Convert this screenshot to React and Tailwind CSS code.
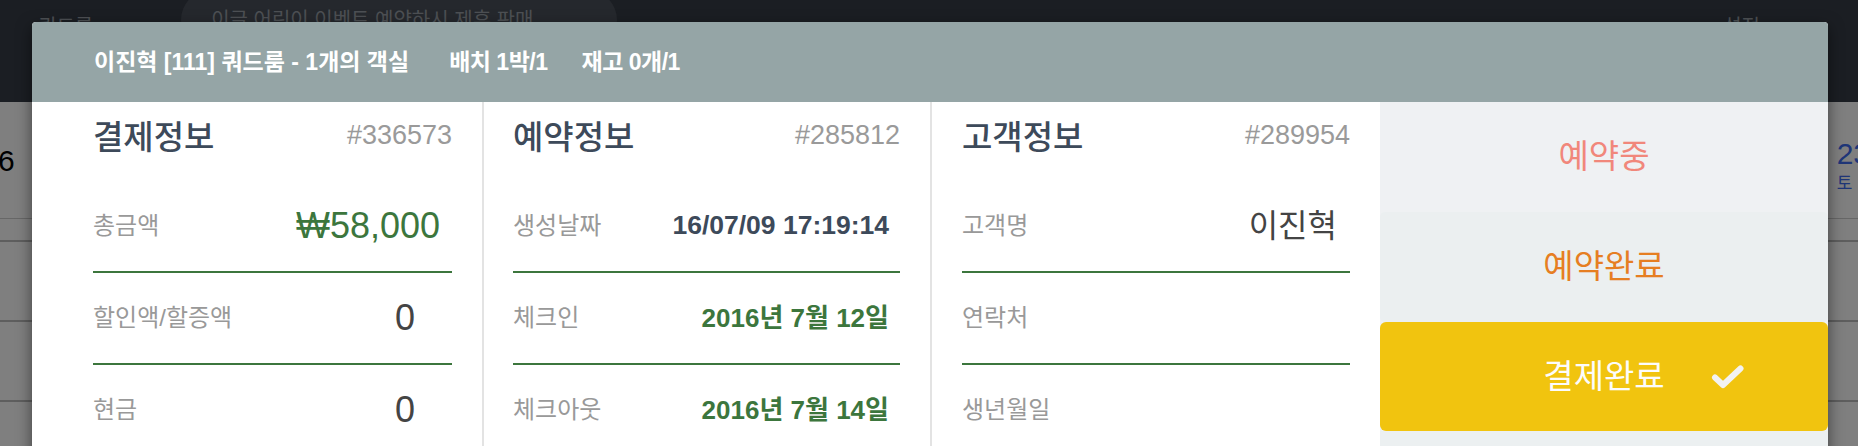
function InfoRow({ label, children, valueClass = '' }) {
  return (
    <div className="flex h-[92px] items-center justify-between border-b-2 border-[#3c763d]">
      <span className="text-[24px] text-[#999999]">{label}</span>
      <span className={valueClass}>{children}</span>
    </div>
  );
}

function InfoColumn({ title, code, className = '', children }) {
  return (
    <div className={`flex flex-col ${className}`}>
      <div className="flex h-[79px] items-start justify-between pt-[19px] leading-none">
        <h2 className="text-[33px] font-medium text-[#3d4a5a]">{title}</h2>
        <span className="pt-[1px] text-[27px] text-[#9a9a9a]">{code}</span>
      </div>
      {children}
    </div>
  );
}

function CheckMark() {
  return (
    <svg
      className="absolute left-[calc(100%+46px)] top-1/2 h-[26px] w-[34px] -translate-y-1/2"
      viewBox="0 0 34 26"
      fill="none"
      stroke="#f2f2f2"
      strokeWidth="6"
      strokeLinecap="round"
      strokeLinejoin="round"
    >
      <path d="M4 13.5 L12 21 L29.5 4.5" />
    </svg>
  );
}

function BackgroundPage() {
  return (
    <div className="flex h-full flex-col">
      <div className="flex h-[102px] items-start bg-[#363c46] px-[38px]">
        <span className="mt-[12px] text-[20px] text-[#9aa0a8]">쿼드룸</span>
        <div className="ml-[88px] mt-[-10px] flex h-[60px] w-[436px] items-center rounded-full bg-[#4a505a] px-[30px] text-[20px] text-[#9aa0a8]">
          이글 어린이 이벤트 예약하시 제휴 판매
        </div>
        <span className="ml-auto mr-[60px] mt-[12px] text-[20px] text-[#9aa0a8]">설정</span>
      </div>
      <div className="flex flex-1 flex-col bg-white">
        <div className="flex h-[117px] items-center justify-between border-b border-[#cfcfcf]">
          <span className="ml-[-2px] text-[30px] text-black">6</span>
          <div className="mr-[-12px] flex flex-col items-start pt-[10px] leading-none">
            <span className="text-[30px] text-[#3f6df0]">23</span>
            <span className="mt-[6px] text-[17px] text-[#3f6df0]">토</span>
          </div>
        </div>
        <div className="h-[23px] border-b-2 border-[#bdbdbd]" />
        <div className="h-[80px] border-b-2 border-[#bdbdbd]" />
        <div className="h-[80px] border-b-2 border-[#bdbdbd]" />
      </div>
    </div>
  );
}

export default function App() {
  return (
    <div className="relative h-[446px] w-[1858px] overflow-hidden font-['Liberation_Sans','Noto_Sans_CJK_KR',sans-serif]">
      <BackgroundPage />
      <div className="absolute inset-0 bg-black/50" />

      <div className="absolute left-[32px] top-[22px] w-[1796px] rounded-t-[4px] bg-white shadow-[0_5px_15px_rgba(0,0,0,0.5)]">
        <div className="flex h-[80px] items-center rounded-t-[4px] bg-[#95a5a6] pl-[62px] text-[23px] font-bold text-white">
          <span>이진혁 [111] 쿼드룸 - 1개의 객실</span>
          <span className="ml-[40px] tracking-[-0.5px]">배치 1박/1</span>
          <span className="ml-[34px] tracking-[-0.5px]">재고 0개/1</span>
        </div>

        <div className="flex h-[460px]">
          <InfoColumn title="결제정보" code="#336573" className="w-[452px] border-r-2 border-[#e3e3e3] pl-[61px] pr-[30px]">
            <InfoRow label="총금액" valueClass="pr-[12px] text-[36px] text-[#3c763d]">₩58,000</InfoRow>
            <InfoRow label="할인액/할증액" valueClass="pr-[37px] text-[36px] text-[#444444]">0</InfoRow>
            <InfoRow label="현금" valueClass="pr-[37px] text-[36px] text-[#444444]">0</InfoRow>
          </InfoColumn>

          <InfoColumn title="예약정보" code="#285812" className="w-[448px] border-r-2 border-[#e3e3e3] pl-[29px] pr-[30px]">
            <InfoRow label="생성날짜" valueClass="pr-[11px] text-[26.5px] font-bold text-[#3d4a5a]">16/07/09 17:19:14</InfoRow>
            <InfoRow label="체크인" valueClass="pr-[11px] text-[26px] font-bold text-[#3c763d]">2016년 7월 12일</InfoRow>
            <InfoRow label="체크아웃" valueClass="pr-[11px] text-[26px] font-bold text-[#3c763d]">2016년 7월 14일</InfoRow>
          </InfoColumn>

          <InfoColumn title="고객정보" code="#289954" className="w-[448px] px-[30px]">
            <InfoRow label="고객명" valueClass="pr-[13px] text-[32px] text-[#444444]">이진혁</InfoRow>
            <InfoRow label="연락처" />
            <InfoRow label="생년월일" />
          </InfoColumn>

          <div className="flex w-[448px] flex-col bg-[#eff1f3]">
            <button type="button" className="flex h-[110px] items-center justify-center text-[33px] text-[#f1877b]">
              예약중
            </button>
            <button type="button" className="flex h-[110px] items-center justify-center rounded-[5px] bg-[#ebeff0] text-[33px] text-[#e67e22]">
              예약완료
            </button>
            <button type="button" className="flex h-[109px] items-center justify-center rounded-[6px] bg-[#f1c40f] text-[33px] text-[#fcfcfc]">
              <span className="relative">
                결제완료
                <CheckMark />
              </span>
            </button>
            <div className="flex-1 bg-[#ecf0f1]" />
          </div>
        </div>
      </div>
    </div>
  );
}
